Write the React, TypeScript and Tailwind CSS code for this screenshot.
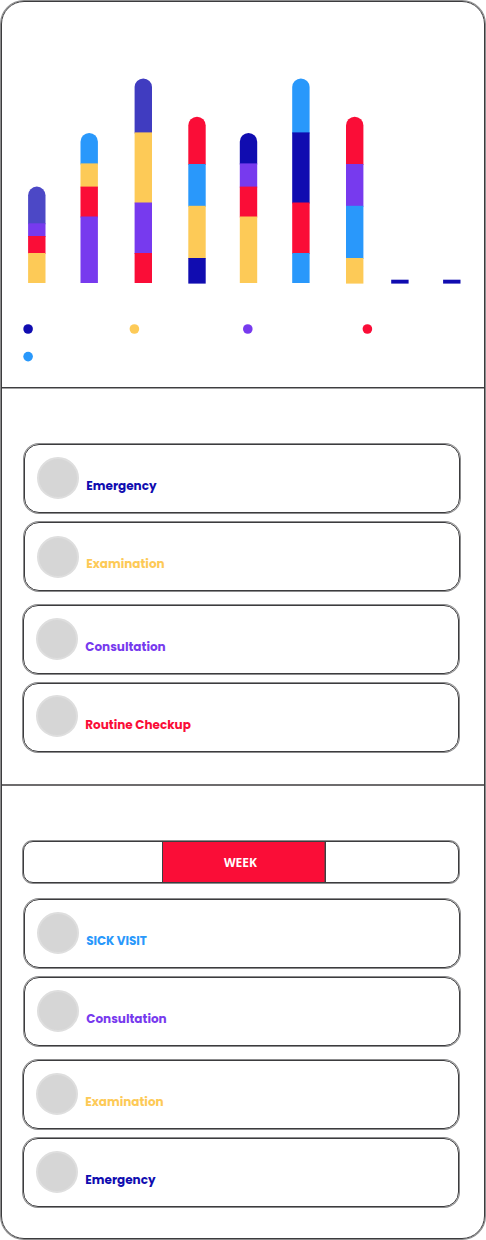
type Segment = { bottom: number; color: string };
type Bar = { x: number; top: number; segments: Segment[] };

const NAVY = "#100cb0";
const BLUE = "#2998fb";
const GOLD = "#fdca57";
const RED = "#fa0d37";
const VIOLET = "#773aee";

const bars: Bar[] = [
  { x: 28.1, top: 186.6, segments: [{ bottom: 223.3, color: "#4c48c6" }, { bottom: 236, color: VIOLET }, { bottom: 253, color: RED }, { bottom: 283, color: GOLD }] },
  { x: 80.5, top: 133, segments: [{ bottom: 163.4, color: BLUE }, { bottom: 186.6, color: GOLD }, { bottom: 216.5, color: RED }, { bottom: 283, color: VIOLET }] },
  { x: 134.6, top: 78.4, segments: [{ bottom: 132.4, color: "#403cc0" }, { bottom: 202.5, color: GOLD }, { bottom: 253, color: VIOLET }, { bottom: 283, color: RED }] },
  { x: 188.3, top: 116.7, segments: [{ bottom: 164, color: RED }, { bottom: 205.8, color: BLUE }, { bottom: 258, color: GOLD }, { bottom: 283.6, color: NAVY }] },
  { x: 239.8, top: 133, segments: [{ bottom: 163.4, color: NAVY }, { bottom: 186.6, color: VIOLET }, { bottom: 216.5, color: RED }, { bottom: 283, color: GOLD }] },
  { x: 292.2, top: 78.4, segments: [{ bottom: 132.4, color: BLUE }, { bottom: 202.5, color: NAVY }, { bottom: 253, color: RED }, { bottom: 283, color: BLUE }] },
  { x: 346, top: 116.7, segments: [{ bottom: 164, color: RED }, { bottom: 205.8, color: VIOLET }, { bottom: 258, color: BLUE }, { bottom: 283.6, color: GOLD }] },
];

const BAR_WIDTH = 17.4;

function Chart() {
  return (
    <svg width="482" height="385" viewBox="2 2 482 385" className="block">
      {bars.map((bar) => {
        const r = BAR_WIDTH / 2;
        return (
          <g key={bar.x}>
            {bar.segments.map((s, i) => {
              // Each segment reaches slightly under the next one so that no seam shows.
              const isLast = i === bar.segments.length - 1;
              const end = isLast ? s.bottom : s.bottom + 1;
              if (i === 0) {
                return (
                  <path
                    key={i}
                    fill={s.color}
                    d={`M${bar.x} ${end}V${bar.top + r}a${r} ${r} 0 0 1 ${BAR_WIDTH} 0V${end}z`}
                  />
                );
              }
              const top = bar.segments[i - 1].bottom;
              return <rect key={i} x={bar.x} y={top} width={BAR_WIDTH} height={end - top} fill={s.color} />;
            })}
          </g>
        );
      })}
      <rect x="391.2" y="279.7" width="17.4" height="3.9" fill={NAVY} />
      <rect x="443.1" y="279.7" width="17.4" height="3.9" fill={NAVY} />
      <circle cx="28.1" cy="329" r="4.8" fill={NAVY} />
      <circle cx="134.4" cy="329" r="4.8" fill={GOLD} />
      <circle cx="247.8" cy="329" r="4.8" fill={VIOLET} />
      <circle cx="367.4" cy="329" r="4.8" fill={RED} />
      <circle cx="28.1" cy="356.6" r="4.8" fill={BLUE} />
    </svg>
  );
}

type CardProps = { label: string; className?: string; labelClass: string; avatarClass?: string };

function Card({ label, className = "", labelClass, avatarClass = "mt-[12px]" }: CardProps) {
  return (
    <div className={`w-[436px] rounded-[15px] border border-[#3c3c3e] shadow-[0_0_0_1px_#8c8c8d] ${className}`}>
      <div className="flex h-[67px] pl-[12px]">
        <div className={`h-[42px] w-[42px] shrink-0 rounded-full border-2 border-[#dedede] bg-[#d6d6d6] ${avatarClass}`} />
        <span className={`mt-[33px] ml-[7.3px] h-4 text-[12px] leading-4 font-bold whitespace-nowrap ${labelClass}`}>{label}</span>
      </div>
    </div>
  );
}

export default function App() {
  return (
    <main className="h-[1240px] w-[486px] bg-white p-px font-['Poppins','Inter',sans-serif]">
      <div className="h-[1238px] w-[484px] rounded-[23px] border border-[#3c3c3e] shadow-[0_0_0_1px_#8c8c8d]">
        <Chart />
        <section className="flex h-[397px] flex-col border-t border-[#3e3e40] pt-[56px] pl-[22px] shadow-[inset_0_1px_0_0_#a2a2a3]">
          <Card label="Emergency" labelClass="text-[#100cb0]" />
          <Card label="Examination" className="mt-[9px]" avatarClass="mt-[13px]" labelClass="text-[#fdca57]" />
          <Card label="Consultation" className="mt-[14px] -ml-px" labelClass="text-[#773aee]" />
          <Card label="Routine Checkup" className="mt-[9px] -ml-px" avatarClass="mt-[11px]" labelClass="text-[#fa0d37]" />
        </section>
        <section className="flex flex-col border-t-2 border-[#6e6c6d] pt-[55px] pl-[21px]">
          <div className="flex h-[42px] w-[436px] overflow-hidden rounded-[10px] border border-[#3c3c3e] shadow-[0_0_0_1px_#8c8c8d]">
            <div className="w-[138px]" />
            <div className="flex w-[164px] items-center justify-center border-x border-[#3e3e40] bg-[#fa0d37] pt-[2px] pr-[7px] shadow-[inset_-1px_0_0_0_#a22a3c]">
              <span className="font-['Open_Sans',sans-serif] text-[12px] leading-4 font-bold text-white">WEEK</span>
            </div>
            <div className="flex-1" />
          </div>
          <Card label="SICK VISIT" className="mt-[16px] ml-px" labelClass="tracking-[-0.08px] text-[#2998fb]" />
          <Card label="Consultation" className="mt-[9px] ml-px" labelClass="text-[#773aee]" />
          <Card label="Examination" className="mt-[14px]" labelClass="text-[#fdca57]" />
          <Card label="Emergency" className="mt-[9px]" labelClass="text-[#100cb0]" />
        </section>
      </div>
    </main>
  );
}
